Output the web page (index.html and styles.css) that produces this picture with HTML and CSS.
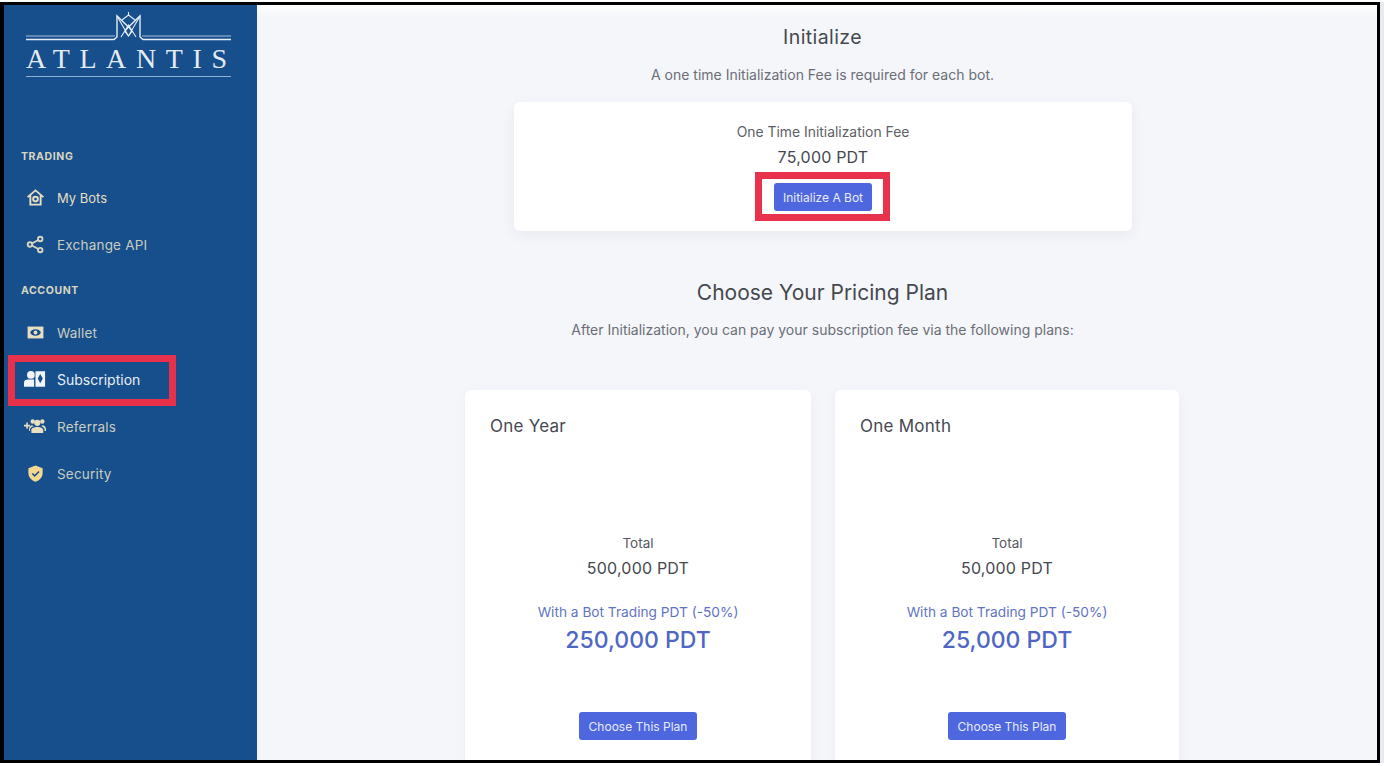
FILE: index.html
```html
<!DOCTYPE html>
<html lang="en">
<head>
<meta charset="utf-8">
<title>Atlantis - Subscription</title>
<link rel="stylesheet" href="styles.css">
</head>
<body>
<div class="frame">
  <aside class="sidebar">
    <div class="logo">
      <svg class="crown" width="205" height="29" viewBox="0 0 205 29" fill="none">
        <path d="M0 24H89M116 24H205" stroke="#a9c0dc" stroke-width="1"/>
        <path d="M0 27.500H88L91 25V4L102.500 15L114 4V25L117 27.500H205" stroke="#e6edf5" stroke-width="1.400"/>
        <path d="M91 4L102.500 24L114 4M95 25L102.500 13L110 25M102.500 0V3M96 8L102.500 3L109 8M102.500 15L106 19.500L102.500 24L99 19.500Z" stroke="#e6edf5" stroke-width="1.100"/>
      </svg>
      <div class="logo-text">ATLANTIS</div>
      <div class="logo-rule"></div>
    </div>
    <div class="section-label label-trading">TRADING</div>
    <a class="nav-item">
      <svg class="nav-icon" viewBox="0 0 24 24" fill="none" stroke="#e8dfc0" stroke-width="2.400"><path d="M2 11.500L12 3L22 11.500M5.500 9.500V21H18.500V9.500"/><circle cx="12" cy="14" r="3"/></svg>
      <span class="nav-text">My Bots</span>
    </a>
    <a class="nav-item">
      <svg class="nav-icon" viewBox="0 0 24 24" fill="none" stroke="#d9d6c0" stroke-width="2.400"><circle cx="5" cy="12" r="2.800"/><circle cx="18" cy="5" r="2.800"/><circle cx="18" cy="19" r="2.800"/><path d="M7.500 10.700L15.500 6.300M7.500 13.300L15.500 17.700"/></svg>
      <span class="nav-text dim">Exchange API</span>
    </a>
    <div class="section-label label-account">ACCOUNT</div>
    <a class="nav-item">
      <svg class="nav-icon" viewBox="0 0 24 24"><path fill="#e8dfc0" d="M2 4.500H22V19.500H2Z"/><ellipse cx="12" cy="12" rx="6.500" ry="4.200" fill="#174e8c"/><circle cx="12" cy="12" r="2.400" fill="#e8dfc0"/></svg>
      <span class="nav-text dim">Wallet</span>
    </a>
    <a class="nav-item active">
      <svg class="nav-icon wide" viewBox="0 0 24 20"><circle cx="7.500" cy="5" r="4.200" fill="#f1f5fa"/><path fill="#f1f5fa" d="M0 18V13.500C0 11 2 10 4 10H11V18Z"/><path fill="#f1f5fa" fill-rule="evenodd" d="M12.500 1H23V18H12.500ZM17.700 4L15 9L17.700 14L20.500 9Z"/></svg>
      <span class="nav-text bright">Subscription</span>
      <span class="annotation nav-annotation"></span>
    </a>
    <a class="nav-item">
      <svg class="nav-icon wide" viewBox="0 0 24 20" fill="#e8dfc0"><path d="M0 8.200H2.500V5.700H4.200V8.200H6.700V9.900H4.200V12.400H2.500V9.900H0Z"/><circle cx="14.500" cy="6" r="3.400"/><circle cx="9.500" cy="4.500" r="2.400"/><circle cx="20" cy="4.500" r="2.400"/><path d="M8 17V14C8 11.500 11 10.500 14.500 10.500S21 11.500 21 14V17ZM5.500 13C5.500 10 7.500 8.500 9 8.500L10.500 9.800C8 10.500 6.500 12 6.500 14V15H5.500ZM22.500 15V14C22.500 12 21 10.500 19 9.800L20 8.500C22 8.500 24 10 24 13V15Z"/></svg>
      <span class="nav-text dim">Referrals</span>
    </a>
    <a class="nav-item">
      <svg class="nav-icon" viewBox="0 0 24 24"><path fill="#f3d98f" d="M12 2L21 5.500V11.500C21 17 17 20.800 12 22.500C7 20.800 3 17 3 11.500V5.500Z"/><path d="M8 12L11 15L16.500 9.500" fill="none" stroke="#174e8c" stroke-width="2"/></svg>
      <span class="nav-text dim">Security</span>
    </a>
  </aside>
  <main class="content">
    <h2 class="page-title">Initialize</h2>
    <p class="lead">A one time Initialization Fee is required for each bot.</p>
    <section class="init-card">
      <div class="init-label">One Time Initialization Fee</div>
      <div class="init-price">75,000 PDT</div>
      <div class="init-action">
        <button class="btn init-btn">Initialize A Bot</button>
        <span class="annotation btn-annotation"></span>
      </div>
    </section>
    <h2 class="plan-title">Choose Your Pricing Plan</h2>
    <p class="plan-lead">After Initialization, you can pay your subscription fee via the following plans:</p>
    <div class="plans">
      <article class="plan">
        <h3 class="plan-name">One Year</h3>
        <div class="plan-total">Total</div>
        <div class="plan-price">500,000 PDT</div>
        <div class="plan-note">With a Bot Trading PDT (-50%)</div>
        <div class="plan-discount">250,000 PDT</div>
        <button class="btn plan-btn">Choose This Plan</button>
      </article>
      <article class="plan">
        <h3 class="plan-name">One Month</h3>
        <div class="plan-total">Total</div>
        <div class="plan-price">50,000 PDT</div>
        <div class="plan-note">With a Bot Trading PDT (-50%)</div>
        <div class="plan-discount">25,000 PDT</div>
        <button class="btn plan-btn">Choose This Plan</button>
      </article>
    </div>
  </main>
</div>
</body>
</html>
```
FILE: styles.css
```css
* { box-sizing: border-box; }
html, body { margin: 0; height: 100%; overflow: hidden; background: #fff; }
body { font-family: Inter, "Open Sans", sans-serif; color: #4a4d55; }
.frame {
  width: 1380px; height: 761px; margin-top: 2px;
  border: 3px solid #000; border-left-width: 4px;
  display: flex; overflow: hidden; background: #f5f6fa;
  box-shadow: 4px 0 0 #e9ebee;
}
.sidebar { width: 253px; flex: none; background: #174e8c; height: 100%; padding-left: 17px; }
.logo { width: 205px; margin-left: 5px; padding-top: 7px; color: #e4ebf3; }
.crown { display: block; }
.logo-text {
  font-family: "Liberation Serif", serif; font-size: 28px; line-height: 30px;
  letter-spacing: 9.6px; white-space: nowrap; margin-top: 3px; height: 32px;
}
.logo-rule { height: 1px; background: #8fb0d6; }
.section-label {
  font-size: 10.5px; font-weight: 700; letter-spacing: .6px; color: #d9d6c0; line-height: 14px;
}
.label-trading { margin-top: 73px; }
.label-account { margin-top: 16px; }
.nav-item { display: flex; align-items: center; height: 47px; position: relative; }
.label-trading + .nav-item { margin-top: 10px; }
.label-account + .nav-item { margin-top: 11px; }
.nav-icon { width: 19px; height: 19px; flex: none; margin-left: 5px; margin-right: 12px; }
.nav-icon.wide { width: 22px; height: 19px; margin-left: 3px; margin-right: 11px; }
.nav-text { font-size: 13px; color: #e6dfc2; }
.nav-text.dim { color: #c9cdbf; font-size: 13.5px; letter-spacing: .2px; }
.nav-text.bright { color: #e9eef5; font-size: 14px; }
.annotation { position: absolute; border: 7px solid #e8324c; pointer-events: none; }
.nav-annotation { left: -13px; top: -1px; width: 168px; height: 51px; }
.content { flex: 1; min-width: 0; padding: 0 197px 0 208px; height: 100%; overflow: hidden; background: linear-gradient(#fff 0, #f5f6fa 12px); }
.page-title { margin: 19px 0 0; font-size: 19.5px; line-height: 26px; font-weight: 400; letter-spacing: .4px; text-align: center; color: #45484f; }
.lead { margin: 16px 0 0; font-size: 14px; line-height: 18px; text-align: center; color: #6b6e76; }
.init-card {
  margin: 18px 48px 0 49px; height: 129px; background: #fff; border-radius: 6px;
  box-shadow: 0 4px 14px rgba(60, 70, 110, .07);
  padding-top: 21px; text-align: center;
}
.init-label { font-size: 13.9px; line-height: 18px; color: #5c5f66; }
.init-price { margin-top: 6px; font-size: 16px; line-height: 20px; font-weight: 400; letter-spacing: .2px; color: #45484f; }
.init-action { position: relative; width: 98px; margin: 16px auto 0; }
.btn {
  display: block; border: 0; border-radius: 3px; background: #4e67de; color: #e8ebfb;
  font-family: inherit; font-size: 12px; padding: 0; text-align: center;
}
.init-btn { width: 98px; height: 28px; }
.btn-annotation { left: -19px; top: -11px; width: 135px; height: 49px; }
.plan-title { margin: 48px 0 0; font-size: 21px; line-height: 28px; font-weight: 400; text-align: center; color: #45484f; }
.plan-lead { margin: 14px 0 0; font-size: 14px; line-height: 18px; text-align: center; color: #6b6e76; }
.plans { display: grid; grid-template-columns: 346px 344px; gap: 24px; margin-top: 51px; }
.plan { background: #fff; border-radius: 6px; height: 400px; padding: 25px 25px; text-align: center; box-shadow: 0 4px 14px rgba(60, 70, 110, .05); }
.plan-name { margin: 0; font-size: 17px; line-height: 22px; font-weight: 400; letter-spacing: .25px; text-align: left; color: #45484f; }
.plan-total { margin-top: 97px; font-size: 13.5px; line-height: 18px; color: #55585f; }
.plan-price { margin-top: 5px; font-size: 16px; line-height: 22px; font-weight: 400; letter-spacing: .2px; color: #45484f; }
.plan-note { margin-top: 24px; font-size: 13.7px; line-height: 18px; color: #5f74c4; }
.plan-discount { margin-top: 2px; font-size: 23px; line-height: 34px; font-weight: 500; color: #4f66c4; }
.plan-btn { width: 118px; height: 28px; margin: 55px auto 0; }
```
